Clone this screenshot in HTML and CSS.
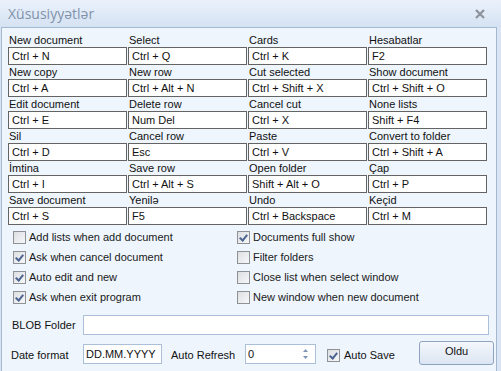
FILE: index.html
```html
<!doctype html>
<html>
	<head>
		<meta charset="utf-8">
		<title>Xüsusiyyətlər</title>
		<link rel="stylesheet" href="styles.css">
	</head>
	<body>
		<div class="window">
			<div class="titlebar">
				<span class="title">Xüsusiyyətlər</span>
				<svg class="close" width="10" height="10" viewBox="0 0 10 10">
					<path d="M1 1 L9 9 M9 1 L1 9" stroke="#8c929c" stroke-width="2.2" fill="none"/>
				</svg>
			</div>
			<div class="panel">
				<div class="keys">
					<div class="key"><div class="key-name">New document</div><div class="key-box">Ctrl + N</div></div>
					<div class="key"><div class="key-name">Select</div><div class="key-box">Ctrl + Q</div></div>
					<div class="key"><div class="key-name">Cards</div><div class="key-box">Ctrl + K</div></div>
					<div class="key"><div class="key-name">Hesabatlar</div><div class="key-box">F2</div></div>

					<div class="key"><div class="key-name">New copy</div><div class="key-box">Ctrl + A</div></div>
					<div class="key"><div class="key-name">New row</div><div class="key-box">Ctrl + Alt + N</div></div>
					<div class="key"><div class="key-name">Cut selected</div><div class="key-box">Ctrl + Shift + X</div></div>
					<div class="key"><div class="key-name">Show document</div><div class="key-box">Ctrl + Shift + O</div></div>

					<div class="key"><div class="key-name">Edit document</div><div class="key-box">Ctrl + E</div></div>
					<div class="key"><div class="key-name">Delete row</div><div class="key-box">Num Del</div></div>
					<div class="key"><div class="key-name">Cancel cut</div><div class="key-box">Ctrl + X</div></div>
					<div class="key"><div class="key-name">None lists</div><div class="key-box">Shift + F4</div></div>

					<div class="key"><div class="key-name">Sil</div><div class="key-box">Ctrl + D</div></div>
					<div class="key"><div class="key-name">Cancel row</div><div class="key-box">Esc</div></div>
					<div class="key"><div class="key-name">Paste</div><div class="key-box">Ctrl + V</div></div>
					<div class="key"><div class="key-name">Convert to folder</div><div class="key-box">Ctrl + Shift + A</div></div>

					<div class="key"><div class="key-name">İmtina</div><div class="key-box">Ctrl + I</div></div>
					<div class="key"><div class="key-name">Save row</div><div class="key-box">Ctrl + Alt + S</div></div>
					<div class="key"><div class="key-name">Open folder</div><div class="key-box">Shift + Alt + O</div></div>
					<div class="key"><div class="key-name">Çap</div><div class="key-box">Ctrl + P</div></div>

					<div class="key"><div class="key-name">Save document</div><div class="key-box">Ctrl + S</div></div>
					<div class="key"><div class="key-name">Yenilə</div><div class="key-box">F5</div></div>
					<div class="key"><div class="key-name">Undo</div><div class="key-box">Ctrl + Backspace</div></div>
					<div class="key"><div class="key-name">Keçid</div><div class="key-box">Ctrl + M</div></div>
				</div>

				<div class="options">
					<div class="option"><span class="check"></span>Add lists when add document</div>
					<div class="option"><span class="check checked"></span>Documents full show</div>
					<div class="option"><span class="check checked"></span>Ask when cancel document</div>
					<div class="option"><span class="check"></span>Filter folders</div>
					<div class="option"><span class="check checked"></span>Auto edit and new</div>
					<div class="option"><span class="check"></span>Close list when select window</div>
					<div class="option"><span class="check checked"></span>Ask when exit program</div>
					<div class="option"><span class="check"></span>New window when new document</div>
				</div>

				<div class="blob-row">
					<span class="field-label">BLOB Folder</span>
					<div class="field blob-field"></div>
				</div>

				<div class="bottom-row">
					<span class="field-label date-label">Date format</span>
					<div class="field date-field">DD.MM.YYYY</div>
					<span class="refresh-label">Auto Refresh</span>
					<div class="field spin-field">
						<span>0</span>
						<svg class="spin" width="7" height="14" viewBox="0 0 7 14">
							<path d="M1 5 L3.5 2 L6 5 Z" fill="#7d94b5"/>
							<path d="M1 9 L3.5 12 L6 9 Z" fill="#7d94b5"/>
						</svg>
					</div>
					<span class="check checked save-check"></span>
					<span class="save-label">Auto Save</span>
					<button class="ok-button">Oldu</button>
				</div>
			</div>
		</div>
	</body>
</html>
```

FILE: styles.css
```css
html, body {
	margin: 0px;
	padding: 0px;
	background: #dfe8f5;
}
.window {
	width: 501px;
	height: 371px;
	overflow: hidden;
	display: flex;
	flex-direction: column;
	background: #d9e5f4;
	font-family: "Liberation Sans", Arial, sans-serif;
	font-size: 11px;
	color: #111;
}
.titlebar {
	height: 27px;
	flex: none;
	display: flex;
	align-items: center;
	justify-content: space-between;
	padding: 0px 16px 0px 8px;
	background: linear-gradient(#eaf1fa, #d5e2f3);
}
.title {
	font-family: "Open Sans", "Liberation Sans", sans-serif;
	font-size: 14px;
	color: #8092ab;
}
.close {
	margin-top: 1px;
}
.panel {
	flex: 1;
	margin: 0px 4px 0px 1px;
	background: #eef5fd;
	border: 1px solid #a5b8d1;
	border-bottom: none;
	padding: 5px 0px 0px 6px;
}
.keys {
	display: grid;
	grid-template-columns: repeat(4, 120px);
}
.key-name {
	height: 14px;
	line-height: 14px;
	padding-left: 1px;
	white-space: nowrap;
}
.key-box {
	height: 18px;
	box-sizing: border-box;
	border: 1px solid #646464;
	background: #fff;
	line-height: 16px;
	padding-left: 3px;
	white-space: nowrap;
	margin-right: 1px;
}
.options {
	display: grid;
	grid-template-columns: 224px 1fr;
	margin-top: 2px;
	padding-left: 5px;
}
.option {
	height: 20px;
	display: flex;
	align-items: center;
	white-space: nowrap;
	color: #1a1a1a;
}
.check {
	width: 11px;
	height: 11px;
	flex: none;
	border: 1px solid #8e9297;
	background: linear-gradient(135deg, #dcdfe3, #f6f7f8);
	margin-right: 3px;
	position: relative;
}
.check.checked::after {
	content: "";
	position: absolute;
	left: 3px;
	top: 1px;
	width: 3px;
	height: 6px;
	border: solid #4b6390;
	border-width: 0px 2px 2px 0px;
	transform: rotate(40deg);
}
.blob-row {
	display: flex;
	align-items: center;
	margin-top: 8px;
	padding-left: 4px;
}
.field-label {
	width: 71px;
	flex: none;
}
.field {
	height: 20px;
	box-sizing: border-box;
	border: 1px solid #abbfd8;
	background: #fff;
	line-height: 18px;
	padding-left: 2px;
}
.blob-field {
	width: 406px;
}
.bottom-row {
	display: flex;
	align-items: center;
	margin-top: 7px;
	padding-left: 3px;
}
.date-label {
	width: 72px;
	margin-top: 2px;
}
.date-field {
	width: 79px;
}
.refresh-label {
	width: 74px;
	margin-left: 9px;
	margin-top: 2px;
}
.spin-field {
	width: 71px;
	display: flex;
	align-items: center;
	justify-content: space-between;
	padding-right: 6px;
}
.spin {
	display: block;
}
.save-check {
	margin-left: 11px;
	margin-right: 4px;
	margin-top: 4px;
}
.save-label {
	width: 75px;
	margin-top: 2px;
}
.ok-button {
	width: 75px;
	height: 24px;
	margin-top: -1px;
	border: 1px solid #8fa3c0;
	border-radius: 3px;
	background: linear-gradient(#f4f7fc, #dbe5f2);
	font-family: "Liberation Sans", Arial, sans-serif;
	font-size: 11px;
	color: #111;
	padding: 0px 0px 4px 0px;
}
```
